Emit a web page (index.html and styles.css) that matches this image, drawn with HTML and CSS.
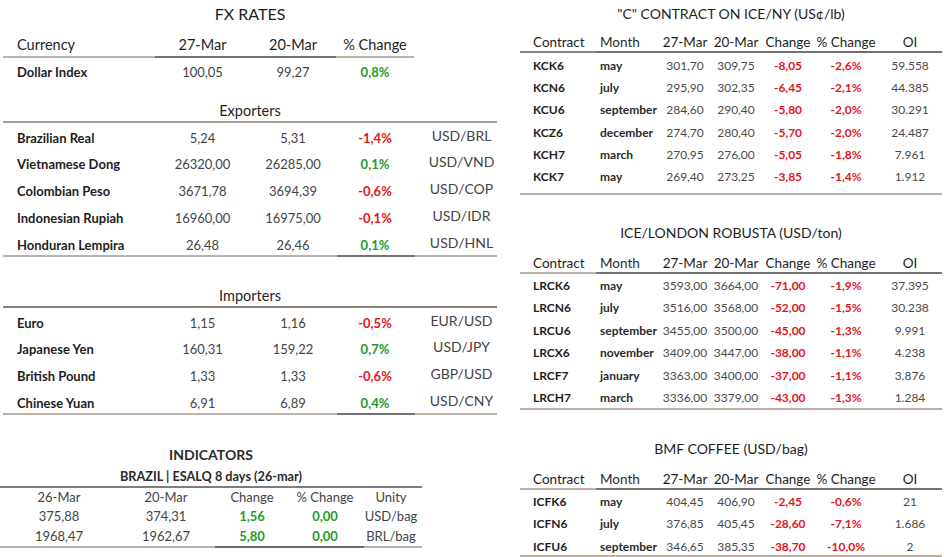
FILE: index.html
```html
<!DOCTYPE html>
<html lang="en">
<head>
<meta charset="utf-8">
<title>FX Rates and Coffee Futures</title>
<link rel="stylesheet" href="styles.css">
</head>
<body>
<div class="page">
  <section class="left">
    <div class="fx">
      <h2 class="title">FX RATES</h2>
      <div class="row head">
        <div class="c name b-tan">Currency</div>
        <div class="c b-dark">27-Mar</div>
        <div class="c b-dark">20-Mar</div>
        <div class="c b-tan">% Change</div>
        <div class="c"></div>
      </div>
      <div class="row dollar">
        <div class="c name">Dollar Index</div>
        <div class="c val">100,05</div>
        <div class="c val">99,27</div>
        <div class="c pos">0,8%</div>
        <div class="c"></div>
      </div>
      <h3 class="group">Exporters</h3>
      <div class="rows exp">
        <div class="row"><div class="c name">Brazilian Real</div><div class="c val">5,24</div><div class="c val">5,31</div><div class="c neg">-1,4%</div><div class="c unit">USD/BRL</div></div>
        <div class="row"><div class="c name">Vietnamese Dong</div><div class="c val">26320,00</div><div class="c val">26285,00</div><div class="c pos">0,1%</div><div class="c unit">USD/VND</div></div>
        <div class="row"><div class="c name">Colombian Peso</div><div class="c val">3671,78</div><div class="c val">3694,39</div><div class="c neg">-0,6%</div><div class="c unit">USD/COP</div></div>
        <div class="row"><div class="c name">Indonesian Rupiah</div><div class="c val">16960,00</div><div class="c val">16975,00</div><div class="c neg">-0,1%</div><div class="c unit">USD/IDR</div></div>
        <div class="row"><div class="c name">Honduran Lempira</div><div class="c val">26,48</div><div class="c val">26,46</div><div class="c pos">0,1%</div><div class="c unit">USD/HNL</div></div>
      </div>
      <h3 class="group imp-title">Importers</h3>
      <div class="rows imp">
        <div class="row"><div class="c name">Euro</div><div class="c val">1,15</div><div class="c val">1,16</div><div class="c neg">-0,5%</div><div class="c unit">EUR/USD</div></div>
        <div class="row"><div class="c name">Japanese Yen</div><div class="c val">160,31</div><div class="c val">159,22</div><div class="c pos">0,7%</div><div class="c unit">USD/JPY</div></div>
        <div class="row"><div class="c name">British Pound</div><div class="c val">1,33</div><div class="c val">1,33</div><div class="c neg">-0,6%</div><div class="c unit">GBP/USD</div></div>
        <div class="row"><div class="c name">Chinese Yuan</div><div class="c val">6,91</div><div class="c val">6,89</div><div class="c pos">0,4%</div><div class="c unit">USD/CNY</div></div>
      </div>
    </div>
    <div class="ind">
      <h2 class="ind-title">INDICATORS</h2>
      <div class="ind-sub">BRAZIL | ESALQ 8 days (26-mar)</div>
      <div class="ind-row ind-head"><div>26-Mar</div><div>20-Mar</div><div>Change</div><div>% Change</div><div>Unity</div></div>
      <div class="ind-body">
        <div class="ind-row"><div>375,88</div><div>374,31</div><div class="pos">1,56</div><div class="pos">0,00</div><div>USD/bag</div></div>
        <div class="ind-row"><div>1968,47</div><div>1962,67</div><div class="pos">5,80</div><div class="pos">0,00</div><div>BRL/bag</div></div>
      </div>
    </div>
  </section>

  <section class="right">
    <div class="fut kc">
      <h2 class="title">"C" CONTRACT ON ICE/NY (US¢/lb)</h2>
      <div class="frow fhead all-dark">
        <div class="code">Contract</div><div class="month">Month</div><div>27-Mar</div><div>20-Mar</div><div>Change</div><div>% Change</div><div>OI</div>
      </div>
      <div class="fbody">
        <div class="frow"><div class="code">KCK6</div><div class="month">may</div><div class="v">301,70</div><div class="v">309,75</div><div class="n">-8,05</div><div class="n">-2,6%</div><div class="v">59.558</div></div>
        <div class="frow"><div class="code">KCN6</div><div class="month">july</div><div class="v">295,90</div><div class="v">302,35</div><div class="n">-6,45</div><div class="n">-2,1%</div><div class="v">44.385</div></div>
        <div class="frow"><div class="code">KCU6</div><div class="month">september</div><div class="v">284,60</div><div class="v">290,40</div><div class="n">-5,80</div><div class="n">-2,0%</div><div class="v">30.291</div></div>
        <div class="frow"><div class="code">KCZ6</div><div class="month">december</div><div class="v">274,70</div><div class="v">280,40</div><div class="n">-5,70</div><div class="n">-2,0%</div><div class="v">24.487</div></div>
        <div class="frow"><div class="code">KCH7</div><div class="month">march</div><div class="v">270,95</div><div class="v">276,00</div><div class="n">-5,05</div><div class="n">-1,8%</div><div class="v">7.961</div></div>
        <div class="frow"><div class="code">KCK7</div><div class="month">may</div><div class="v">269,40</div><div class="v">273,25</div><div class="n">-3,85</div><div class="n">-1,4%</div><div class="v">1.912</div></div>
      </div>
    </div>

    <div class="fut rc">
      <h2 class="title">ICE/LONDON ROBUSTA (USD/ton)</h2>
      <div class="frow fhead">
        <div class="code">Contract</div><div class="month">Month</div><div>27-Mar</div><div>20-Mar</div><div>Change</div><div>% Change</div><div>OI</div>
      </div>
      <div class="fbody">
        <div class="frow"><div class="code">LRCK6</div><div class="month">may</div><div class="v">3593,00</div><div class="v">3664,00</div><div class="n">-71,00</div><div class="n">-1,9%</div><div class="v">37.395</div></div>
        <div class="frow"><div class="code">LRCN6</div><div class="month">july</div><div class="v">3516,00</div><div class="v">3568,00</div><div class="n">-52,00</div><div class="n">-1,5%</div><div class="v">30.238</div></div>
        <div class="frow"><div class="code">LRCU6</div><div class="month">september</div><div class="v">3455,00</div><div class="v">3500,00</div><div class="n">-45,00</div><div class="n">-1,3%</div><div class="v">9.991</div></div>
        <div class="frow"><div class="code">LRCX6</div><div class="month">november</div><div class="v">3409,00</div><div class="v">3447,00</div><div class="n">-38,00</div><div class="n">-1,1%</div><div class="v">4.238</div></div>
        <div class="frow"><div class="code">LRCF7</div><div class="month">january</div><div class="v">3363,00</div><div class="v">3400,00</div><div class="n">-37,00</div><div class="n">-1,1%</div><div class="v">3.876</div></div>
        <div class="frow"><div class="code">LRCH7</div><div class="month">march</div><div class="v">3336,00</div><div class="v">3379,00</div><div class="n">-43,00</div><div class="n">-1,3%</div><div class="v">1.284</div></div>
      </div>
    </div>

    <div class="fut bmf">
      <h2 class="title">BMF COFFEE (USD/bag)</h2>
      <div class="frow fhead">
        <div class="code">Contract</div><div class="month">Month</div><div>27-Mar</div><div>20-Mar</div><div>Change</div><div>% Change</div><div>OI</div>
      </div>
      <div class="fbody">
        <div class="frow"><div class="code">ICFK6</div><div class="month">may</div><div class="v">404,45</div><div class="v">406,90</div><div class="n">-2,45</div><div class="n">-0,6%</div><div class="v">21</div></div>
        <div class="frow"><div class="code">ICFN6</div><div class="month">july</div><div class="v">376,85</div><div class="v">405,45</div><div class="n">-28,60</div><div class="n">-7,1%</div><div class="v">1.686</div></div>
        <div class="frow"><div class="code">ICFU6</div><div class="month">september</div><div class="v">346,65</div><div class="v">385,35</div><div class="n">-38,70</div><div class="n">-10,0%</div><div class="v">2</div></div>
      </div>
    </div>
  </section>
</div>
</body>
</html>
```

FILE: styles.css
```css
* { box-sizing: border-box; margin: 0; padding: 0; }

body {
  margin: 0;
  background: #ffffff;
  font-family: "Lato", "Noto Sans", sans-serif;
  color: #222222;
}

.page {
  display: flex;
  width: 944px;
  height: 557px;
}

/* ---------- left ---------- */
.left {
  width: 500px;
  display: flex;
  flex-direction: column;
}

.fx {
  margin-left: 3px;
  width: 494px;
}

.title {
  font-size: 16px;
  font-weight: 400;
  line-height: 28px;
  height: 28px;
  text-align: center;
  color: #1e1e1e;
}

.row {
  display: grid;
  grid-template-columns: 152px 95px 86px 78px 83px;
}

.c {
  text-align: center;
  font-size: 13px;
  line-height: 17px;
}

.name {
  text-align: left;
  padding-left: 14px;
  font-weight: 700;
  color: #1e1e1e;
}

.val { color: #444444; }
.pos { color: #1f9a1f; font-weight: 700; }
.neg { color: #e3151c; font-weight: 700; }

.unit {
  padding-left: 12px;
  color: #444444;
  font-size: 14px;
  margin-top: -3px;
}

.head .c {
  font-size: 14.5px;
  font-weight: 400;
  color: #1e1e1e;
  padding-top: 6px;
  height: 30px;
  line-height: 22px;
}
.head .name { font-weight: 400; }

.b-tan { border-bottom: 2px solid #bdb2a8; }
.b-dark { border-bottom: 2px solid #727272; }

.dollar { height: 28px; }
.dollar .c { line-height: 28px; }

.group {
  font-size: 14.5px;
  font-weight: 400;
  color: #1e1e1e;
  text-align: center;
  padding-top: 14px;
  line-height: 21px;
  height: 37px;
  border-bottom: 2px solid #a79c92;
}

.imp-title {
  padding-top: 28px;
  height: 51px;
  border-bottom-color: #8c8279;
}

.rows {
  display: grid;
  grid-auto-rows: 26.75px;
  border-bottom: 2px solid #bdb2a8;
  border-image: linear-gradient(to right, #bdb2a8 0 334px, #727272 334px 411px, #bdb2a8 411px) 1;
}
.rows .c { padding-top: 6.5px; }
.rows .unit { padding-top: 3.5px; margin-top: 0; }

.exp { height: 134px; }
.imp { height: 107px; }

/* ---------- indicators ---------- */
.ind {
  width: 422px;
}

.ind-title {
  font-size: 14px;
  font-weight: 700;
  color: #2a2a2a;
  text-align: center;
  padding-top: 30px;
  line-height: 20px;
  height: 50px;
}

.ind-sub {
  font-size: 12.7px;
  font-weight: 700;
  color: #2a2a2a;
  text-align: center;
  padding-top: 2px;
  line-height: 19px;
  height: 23px;
  border-bottom: 2px solid #7d7d7d;
}

.ind-row {
  display: grid;
  grid-template-columns: 118px 96px 76px 70px 62px;
  font-size: 13px;
  color: #444444;
  text-align: center;
  height: 20px;
  line-height: 20px;
}
.ind-row .pos { font-weight: 700; }

.ind-head {
  height: 18px;
  line-height: 18px;
}

.ind-body {
  border-bottom: 2px solid #bdb2a8;
  border-image: linear-gradient(to right, #bdb2a8 0 215px, #6e6e6e 215px 363px, #bdb2a8 363px) 1;
}

/* ---------- right ---------- */
.right {
  width: 444px;
  padding-left: 20px;
  display: flex;
  flex-direction: column;
}

.fut { width: 422px; }

.right .title { font-size: 14px; }

.frow {
  display: grid;
  grid-template-columns: 76px 64px 50px 52px 52px 64px 64px;
  font-size: 12px;
  line-height: 17px;
  text-align: center;
  white-space: nowrap;
}

.frow .code {
  text-align: left;
  padding-left: 13px;
  font-weight: 700;
  color: #1e1e1e;
}
.frow .month {
  text-align: left;
  padding-left: 4px;
  font-weight: 700;
  color: #2a2a2a;
}
.frow .v { color: #4a4a4a; }
.frow .n { color: #e3151c; font-weight: 700; }

.fhead > div {
  font-size: 13.5px;
  color: #1e1e1e;
  font-weight: 400;
  padding-top: 6px;
  height: 25px;
  border-bottom: 2px solid #727272;
}
.fhead .code, .fhead .month { font-weight: 400; }
.fhead .code { border-bottom-color: #bdb2a8; }
.all-dark .code { border-bottom-color: #8a8580; }

.fbody {
  display: grid;
  align-content: start;
  border-bottom: 2px solid #b9afa6;
}
.fbody .frow { height: 22.4px; padding-top: 3px; }

.kc .fbody { height: 142px; }
.kc .fbody .frow { padding-top: 3.5px; }

.rc .title { padding-top: 28px; height: 48px; line-height: 20px; }
.rc .fhead > div { padding-top: 12px; height: 31px; }
.rc .fbody { height: 136px; }

.bmf .title { padding-top: 29px; height: 49px; line-height: 20px; }
.bmf .fhead > div { padding-top: 11.5px; height: 30.5px; }
.bmf .fbody { height: 67.5px; }
.bmf .fbody .frow { height: 22.5px; }
```
